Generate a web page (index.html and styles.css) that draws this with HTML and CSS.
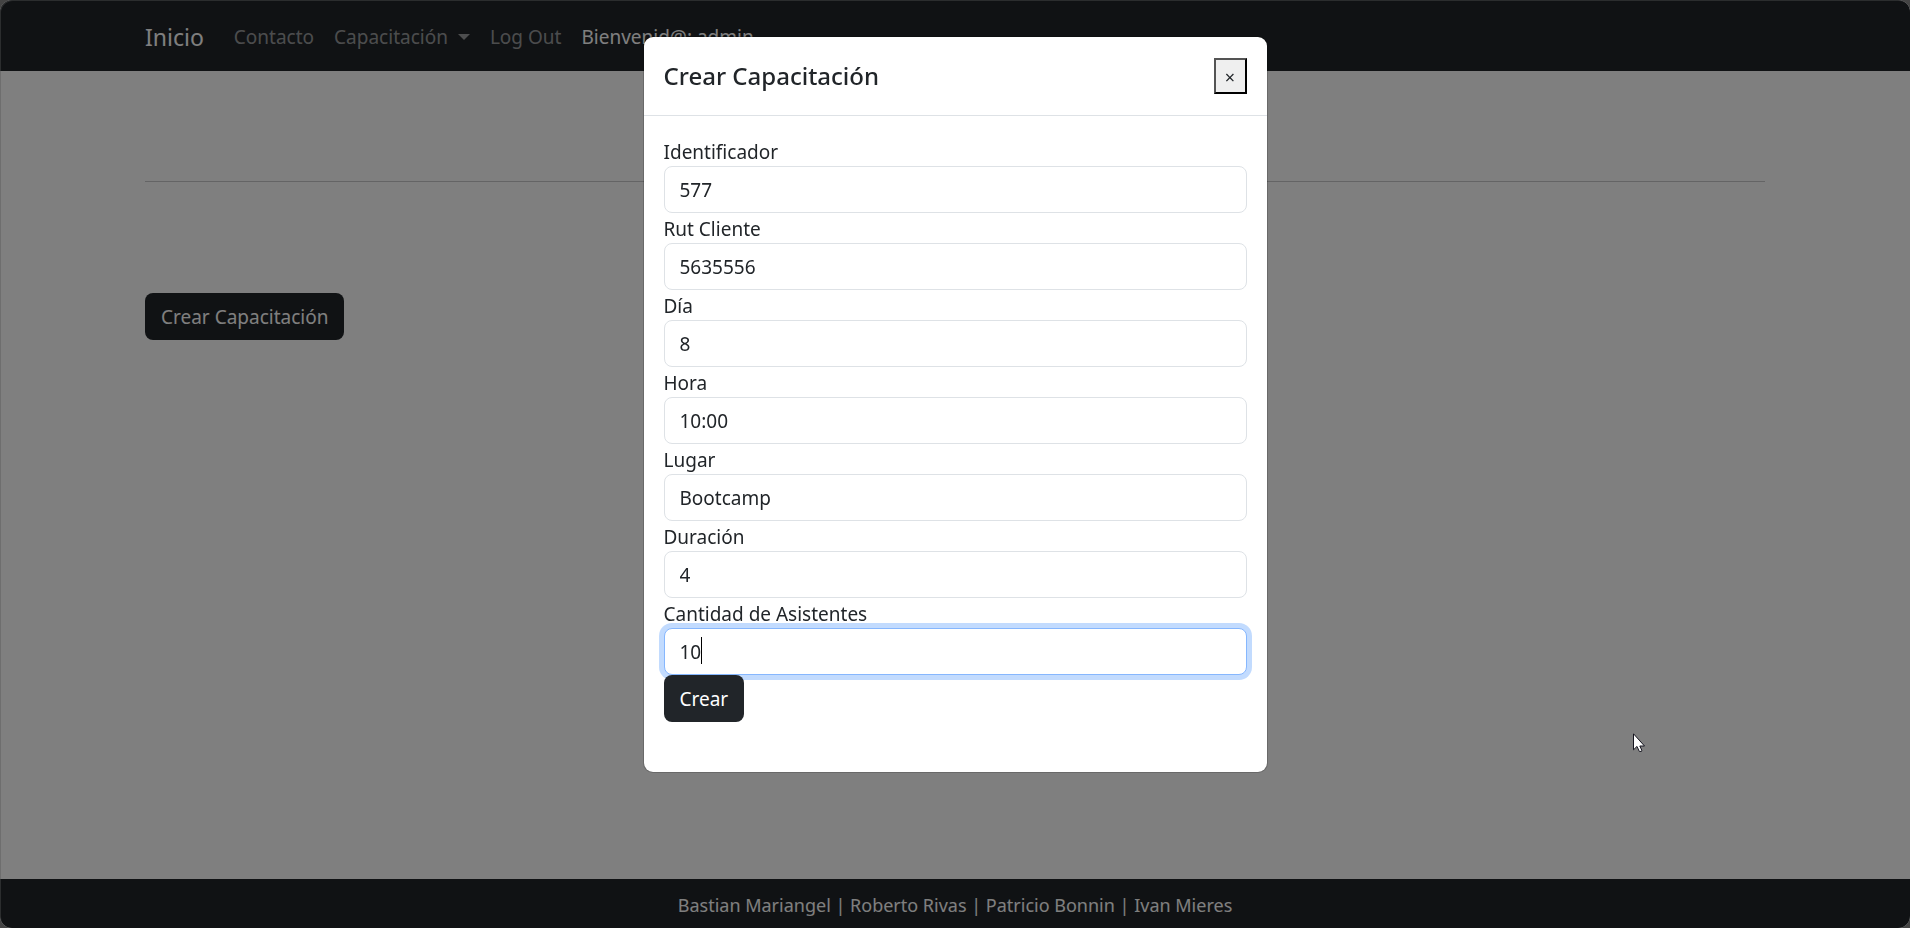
FILE: index.html
```html
<!DOCTYPE html>
<html lang="es">
<head>
<meta charset="utf-8">
<meta name="viewport" content="width=device-width, initial-scale=1">
<title>Crear Capacitación</title>
<link rel="stylesheet" href="styles.css">
</head>
<body>
<div class="page">
  <nav class="navbar">
    <div class="container navbar-inner">
      <a class="brand" href="#">Inicio</a>
      <ul class="nav-list">
        <li><a class="nav-link" href="#">Contacto</a></li>
        <li><a class="nav-link dropdown" href="#">Capacitación</a></li>
        <li><a class="nav-link" href="#">Log Out</a></li>
        <li><a class="nav-link active" href="#">Bienvenid@: admin</a></li>
      </ul>
    </div>
  </nav>
  <main class="container content">
    <hr class="divider">
    <button class="btn" type="button">Crear Capacitación</button>
  </main>
  <footer class="footer">Bastian Mariangel | Roberto Rivas | Patricio Bonnin | Ivan Mieres</footer>
</div>
<div class="backdrop">
  <div class="modal" role="dialog" aria-labelledby="modal-title">
    <div class="modal-header">
      <h5 class="modal-title" id="modal-title">Crear Capacitación</h5>
      <button class="close" type="button" aria-label="Cerrar">×</button>
    </div>
    <form class="modal-body">
      <label for="identificador">Identificador</label>
      <input class="control" id="identificador" type="text" value="577">
      <label for="rut">Rut Cliente</label>
      <input class="control" id="rut" type="text" value="5635556">
      <label for="dia">Día</label>
      <input class="control" id="dia" type="text" value="8">
      <label for="hora">Hora</label>
      <input class="control" id="hora" type="text" value="10:00">
      <label for="lugar">Lugar</label>
      <input class="control" id="lugar" type="text" value="Bootcamp">
      <label for="duracion">Duración</label>
      <input class="control" id="duracion" type="text" value="4">
      <label for="asistentes">Cantidad de Asistentes</label>
      <div class="field-active">
        <input class="control focused" id="asistentes" type="text" value="10">
        <span class="text-caret"></span>
      </div>
      <button class="btn submit" type="button">Crear</button>
    </form>
  </div>
  <svg class="pointer" width="12" height="19" viewBox="0 0 12 19" aria-hidden="true">
    <path d="M.5.8v16L4 13.4l2.3 5h2.2l.3-1.2-2-4.2h4.7z" fill="#fff" stroke="#15151f" stroke-width="1"/>
  </svg>
</div>
</body>
</html>
```
FILE: styles.css
```css
*, *::before, *::after { box-sizing: border-box; }

html { background: #444; }

body {
  margin: 0;
  font-family: "Noto Sans", "Open Sans", sans-serif;
  font-size: 19px;
  line-height: 30px;
  color: #212529;
}

.page {
  display: flex;
  flex-direction: column;
  min-height: 100vh;
  background: #fff;
  border-radius: 12px;
  overflow: hidden;
}

.container {
  width: 100%;
  max-width: 1650px;
  margin: 0 auto;
  padding: 0 15px;
}

.navbar { padding: 12px 0 9px; background: #212529; }
.navbar-inner { display: flex; align-items: center; }
.brand {
  margin-right: 20px;
  font-size: 23px;
  line-height: 38px;
  color: #fff;
  text-decoration: none;
}
.nav-list { display: flex; margin: 0; padding: 0; list-style: none; }
.nav-link {
  display: flex;
  align-items: center;
  padding: 10px;
  color: rgba(255, 255, 255, .55);
  text-decoration: none;
}
.nav-link.active { color: #fff; }
.dropdown::after {
  content: "";
  margin-left: 10px;
  border-top: 6px solid;
  border-left: 6px solid transparent;
  border-right: 6px solid transparent;
}

.content { flex: 1; padding-top: 110px; }
.divider {
  margin: 0 0 111px;
  border: 0;
  border-top: 1px solid #c8c9ca;
}

.btn {
  display: block;
  padding: 9px 16px 7px;
  border: 0;
  border-radius: 8px;
  background: #212529;
  color: #fff;
  font: inherit;
  line-height: 31px;
  cursor: pointer;
}

.footer {
  padding: 11px 0 8px;
  background: #212529;
  color: #fff;
  font-size: 18px;
  text-align: center;
}

.backdrop {
  position: fixed;
  inset: 0;
  padding-top: 36px;
  border-radius: 12px;
  background: rgba(0, 0, 0, .5);
  box-shadow: inset 1px 1px 0 rgba(85, 85, 85, .4);
}

.modal {
  max-width: 625px;
  margin: 0 auto;
  border: 1px solid rgba(0, 0, 0, .175);
  border-radius: 10px;
  background: #fff;
  background-clip: padding-box;
}
.modal-header {
  display: flex;
  align-items: center;
  justify-content: space-between;
  padding: 20px;
  border-bottom: 1px solid #dee2e6;
}
.modal-title {
  margin: 0;
  font-size: 24px;
  font-weight: 500;
  line-height: 38px;
}
.close {
  width: 33px;
  height: 36px;
  padding: 2px 0 0;
  border: 2px outset #000;
  background: #efefef;
  color: #212529;
  font: inherit;
  font-size: 18px;
}
.modal-body { padding: 20px 20px 50px; }

label { display: block; padding-top: 2px; line-height: 28px; }
.control {
  display: block;
  width: 100%;
  padding: 8px 15px 6px;
  border: 1px solid #dee2e6;
  border-radius: 8px;
  background: #fff;
  color: #212529;
  font: inherit;
  line-height: 31px;
}
.control:focus, .control.focused {
  border-color: #86b7fe;
  outline: 0;
  box-shadow: 0 0 0 5px #c2dbfe;
}
.field-active { position: relative; }
.text-caret {
  position: absolute;
  top: 9px;
  left: 37px;
  width: 1px;
  height: 27px;
  background: #000;
}
.submit { position: relative; }

.pointer { position: absolute; left: 1633px; top: 733px; }
```
